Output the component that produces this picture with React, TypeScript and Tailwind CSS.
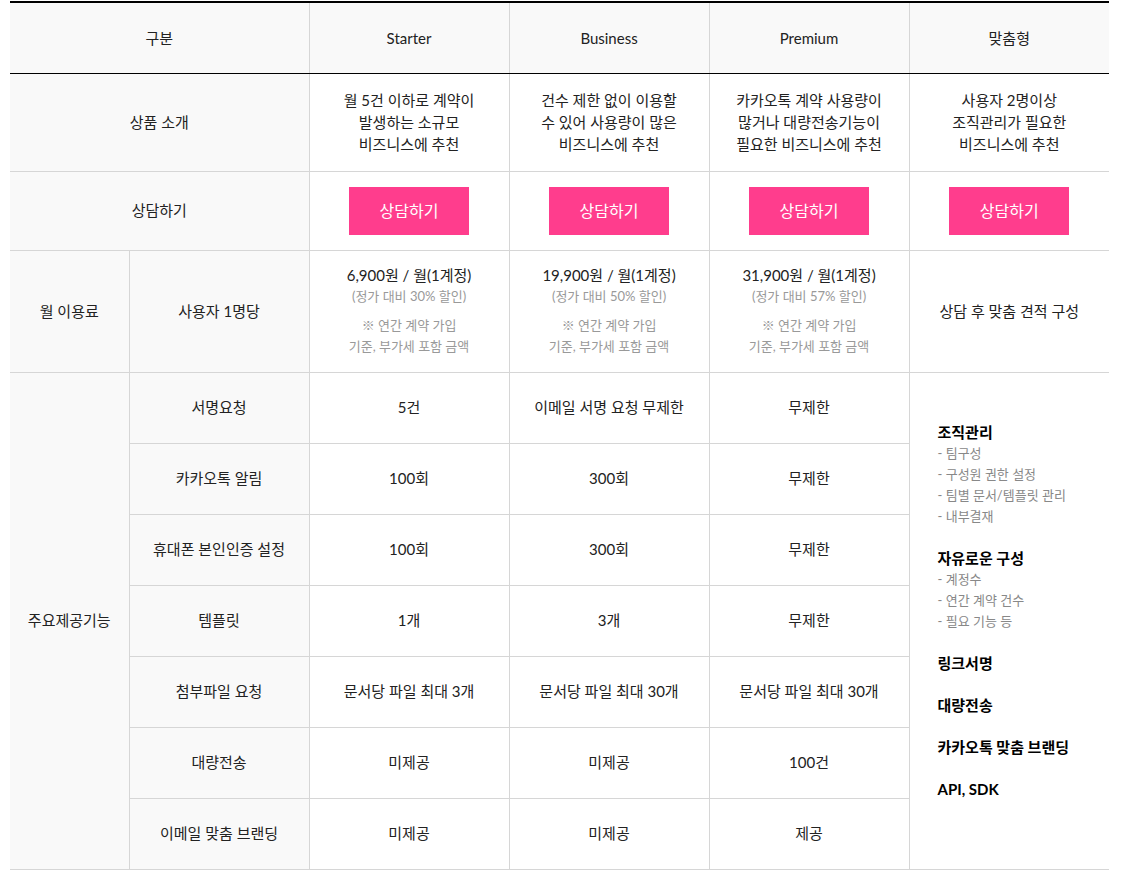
const plans = ["Starter", "Business", "Premium"];

const intro = [
  ["월 5건 이하로 계약이", "발생하는 소규모", "비즈니스에 추천"],
  ["건수 제한 없이 이용할", "수 있어 사용량이 많은", "비즈니스에 추천"],
  ["카카오톡 계약 사용량이", "많거나 대량전송기능이", "필요한 비즈니스에 추천"],
];

const prices = [
  { price: "6,900원 / 월(1계정)", off: "(정가 대비 30% 할인)" },
  { price: "19,900원 / 월(1계정)", off: "(정가 대비 50% 할인)" },
  { price: "31,900원 / 월(1계정)", off: "(정가 대비 57% 할인)" },
];

const features = [
  { label: "서명요청", vals: ["5건", "이메일 서명 요청 무제한", "무제한"] },
  { label: "카카오톡 알림", vals: ["100회", "300회", "무제한"] },
  { label: "휴대폰 본인인증 설정", vals: ["100회", "300회", "무제한"] },
  { label: "템플릿", vals: ["1개", "3개", "무제한"] },
  { label: "첨부파일 요청", vals: ["문서당 파일 최대 3개", "문서당 파일 최대 30개", "문서당 파일 최대 30개"] },
  { label: "대량전송", vals: ["미제공", "미제공", "100건"] },
  { label: "이메일 맞춤 브랜딩", vals: ["미제공", "미제공", "제공"] },
];

const custom = [
  { title: "조직관리", items: ["팀구성", "구성원 권한 설정", "팀별 문서/템플릿 관리", "내부결재"] },
  { title: "자유로운 구성", items: ["계정수", "연간 계약 건수", "필요 기능 등"] },
  { title: "링크서명", items: [] },
  { title: "대량전송", items: [] },
  { title: "카카오톡 맞춤 브랜딩", items: [] },
  { title: "API, SDK", items: [] },
];

const cell = "border border-[#d6d6d6] text-center align-middle p-0";

export default function App() {
  return (
    <div
      className="bg-white pt-px px-[10px] text-[15px] text-[#222]"
      style={{ fontFamily: 'Lato, "Noto Sans CJK KR", sans-serif' }}
    >
      <table className="w-[1099px] border-collapse table-fixed border-t-2 border-t-black">
        <colgroup>
          <col className="w-[119px]" />
          <col className="w-[180px]" />
          <col className="w-[200px]" />
          <col className="w-[200px]" />
          <col className="w-[200px]" />
          <col className="w-[200px]" />
        </colgroup>
        <tbody>
          <tr className="h-[71px] bg-[#f9f9f9]">
            <td colSpan={2} className="border-r border-[#d6d6d6] border-b border-b-black text-center">구분</td>
            {plans.map((p) => (
              <td key={p} className="border-r border-[#d6d6d6] border-b border-b-black text-center">{p}</td>
            ))}
            <td className="border-b border-b-black text-center">맞춤형</td>
          </tr>

          <tr className="h-[98px]">
            <td colSpan={2} className={`${cell} border-l-0 border-t-0 bg-[#f9f9f9]`}>상품 소개</td>
            {intro.map((lines, i) => (
              <td key={i} className={`${cell} border-t-0 leading-[22px]`}>
                {lines.map((l) => (
                  <div key={l}>{l}</div>
                ))}
              </td>
            ))}
            <td className={`${cell} border-t-0 border-r-0 leading-[22px]`}>
              <div>사용자 2명이상</div>
              <div>조직관리가 필요한</div>
              <div>비즈니스에 추천</div>
            </td>
          </tr>

          <tr className="h-[79px]">
            <td colSpan={2} className={`${cell} border-l-0 bg-[#f9f9f9]`}>상담하기</td>
            {[0, 1, 2, 3].map((i) => (
              <td key={i} className={`${cell} ${i === 3 ? "border-r-0" : ""}`}>
                <button className="w-[120px] h-[48px] bg-[#ff3d8d] text-white text-[16px] mx-auto block">
                  상담하기
                </button>
              </td>
            ))}
          </tr>

          <tr className="h-[122px]">
            <td className={`${cell} border-l-0 bg-[#f9f9f9]`}>월 이용료</td>
            <td className={`${cell} bg-[#f9f9f9]`}>사용자 1명당</td>
            {prices.map((p) => (
              <td key={p.price} className={`${cell}`}>
                <div className="leading-[21px]">{p.price}</div>
                <div className="leading-[21px] text-[13px] text-[#999]">{p.off}</div>
                <div className="mt-[8px] leading-[21px] text-[13px] text-[#999]">※ 연간 계약 가입</div>
                <div className="leading-[21px] text-[13px] text-[#999]">기준, 부가세 포함 금액</div>
              </td>
            ))}
            <td className={`${cell} border-r-0`}>상담 후 맞춤 견적 구성</td>
          </tr>

          {features.map((f, r) => (
            <tr key={f.label} className="h-[71px]">
              {r === 0 && (
                <td rowSpan={features.length} className={`${cell} border-l-0 bg-[#f9f9f9]`}>
                  주요제공기능
                </td>
              )}
              <td className={`${cell} bg-[#f9f9f9]`}>{f.label}</td>
              {f.vals.map((v, i) => (
                <td key={i} className={cell}>{v}</td>
              ))}
              {r === 0 && (
                <td rowSpan={features.length} className={`${cell} border-r-0 text-left pl-[28px] pb-[20px]`}>
                  {custom.map((c) => (
                    <div key={c.title} className="mb-[20px] last:mb-0">
                      <div className="font-bold text-[15px] leading-[22px] text-black">{c.title}</div>
                      {c.items.map((it) => (
                        <div key={it} className="text-[13px] leading-[21px] text-[#888]">- {it}</div>
                      ))}
                    </div>
                  ))}
                </td>
              )}
            </tr>
          ))}
        </tbody>
      </table>
    </div>
  );
}
